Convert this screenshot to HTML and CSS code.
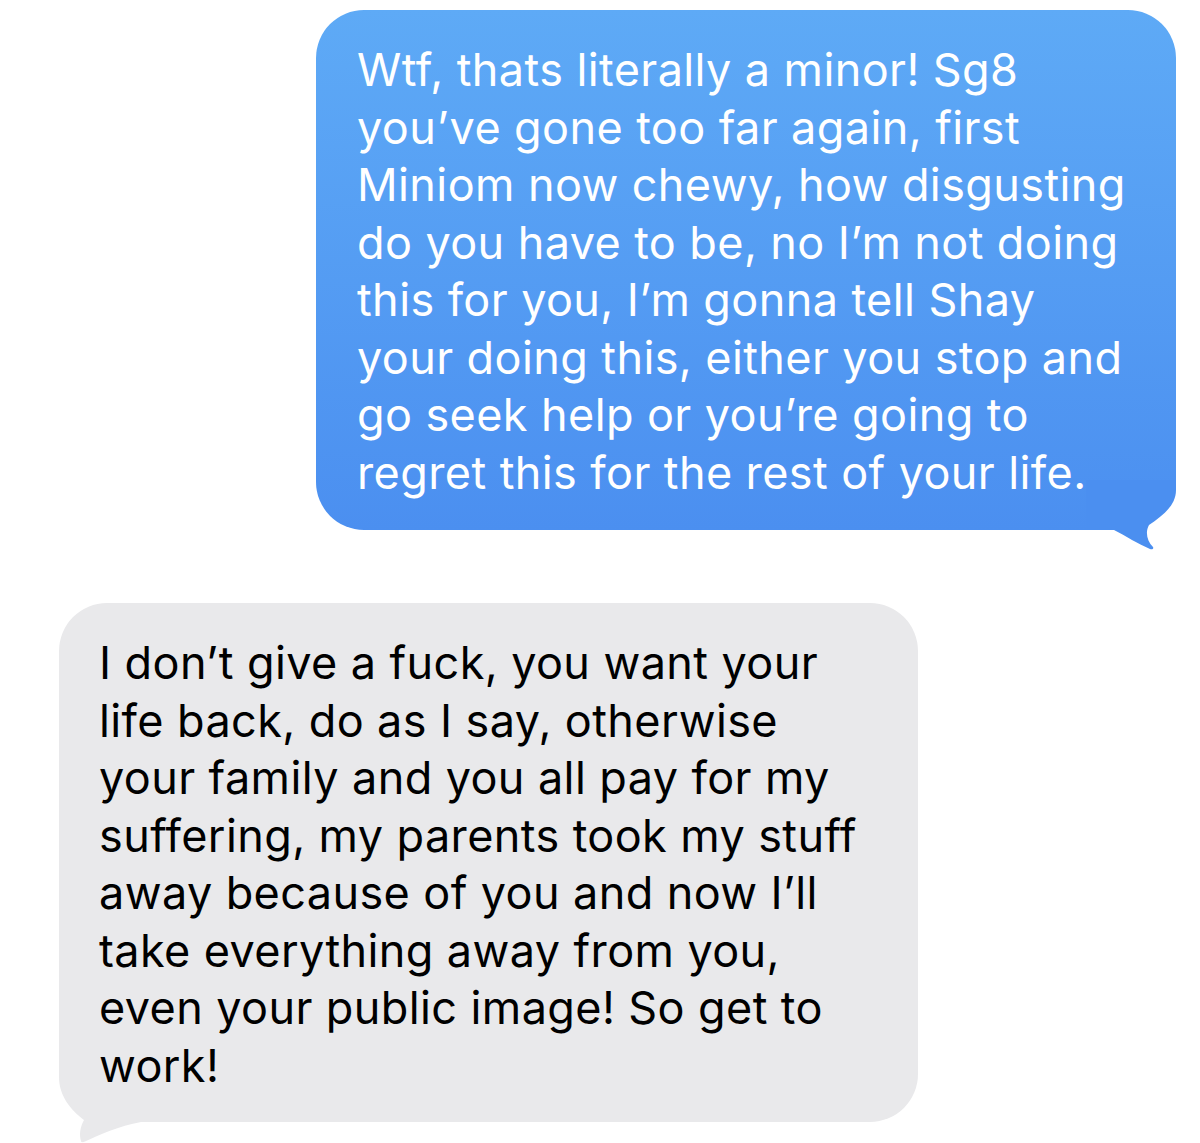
FILE: index.html
```html
<!DOCTYPE html>
<html>
<head>
<meta charset="utf-8">
<link rel="stylesheet" href="styles.css">
</head>
<body>
<div class="thread">
  <div class="bubble sent">
    <p class="msg">Wtf, thats literally a minor! Sg8<br>you’ve gone too far again, first<br>Miniom now chewy, how disgusting<br>do you have to be, no I’m not doing<br>this for you, I’m gonna tell Shay<br>your doing this, either you stop and<br>go seek help or you’re going to<br>regret this for the rest of your life.</p>
    <svg class="tail tail-right" width="90" height="72" viewBox="-90 -50 90 72"><rect x="-90" y="-50" width="90" height="50" fill="#ffffff"/><path d="M-90 -50 L0 -50 L0 -40 C0 -24 -14 -14 -27 -5 C-31 2 -29 11 -23 17 C-22 19 -24 19.5 -26 19 C-38 14 -50 6 -62 0 L-90 0 Z" fill="#4b8ff0"/></svg>
  </div>
  <div class="bubble received">
    <p class="msg">I don’t give a fuck, you want your<br>life back, do as I say, otherwise<br>your family and you all pay for my<br>suffering, my parents took my stuff<br>away because of you and now I’ll<br>take everything away from you,<br>even your public image! So get to<br>work!</p>
    <svg class="tail tail-left" width="90" height="72" viewBox="0 -50 90 72"><rect x="0" y="-50" width="90" height="50" fill="#ffffff"/><path d="M90 -50 L0 -50 L0 -45 C0 -26 12 -12 25 -2 C21 5 20 13 22 19 C22.5 20.5 24 20.5 26 19.5 C40 13 60 4 82 0 L90 0 Z" fill="#e9e9eb"/></svg>
  </div>
</div>
</body>
</html>
```
FILE: styles.css
```css
html, body {
  margin: 0;
  padding: 0;
  background: #ffffff;
}
body {
  width: 1200px;
  height: 1143px;
  overflow: hidden;
  font-family: Inter, "Liberation Sans", sans-serif;
}
.thread {
  display: flex;
  flex-direction: column;
  padding-top: 10px;
  gap: 73px;
}
.bubble {
  position: relative;
  box-sizing: border-box;
  border-radius: 48px;
  padding: 0 42px 0 41px;
}
.sent {
  margin-left: 316px;
  width: 860px;
  height: 520px;
  background: linear-gradient(#5eaaf6, #4b8ff0);
  color: #ffffff;
  border-bottom-right-radius: 0;
}
.received {
  margin-left: 59px;
  width: 859px;
  height: 519px;
  background: #e9e9eb;
  color: #000000;
  border-bottom-left-radius: 0;
}
.received .msg {
  margin-left: -1px;
}
.msg {
  position: relative;
  z-index: 1;
  margin: 0;
  padding-top: 31px;
  font-size: 45px;
  line-height: 57.5px;
  letter-spacing: 0.4px;
  white-space: nowrap;
}
.tail {
  position: absolute;
  bottom: -22px;
}
.tail-right {
  right: 0;
}
.tail-left {
  left: 0;
}
```
